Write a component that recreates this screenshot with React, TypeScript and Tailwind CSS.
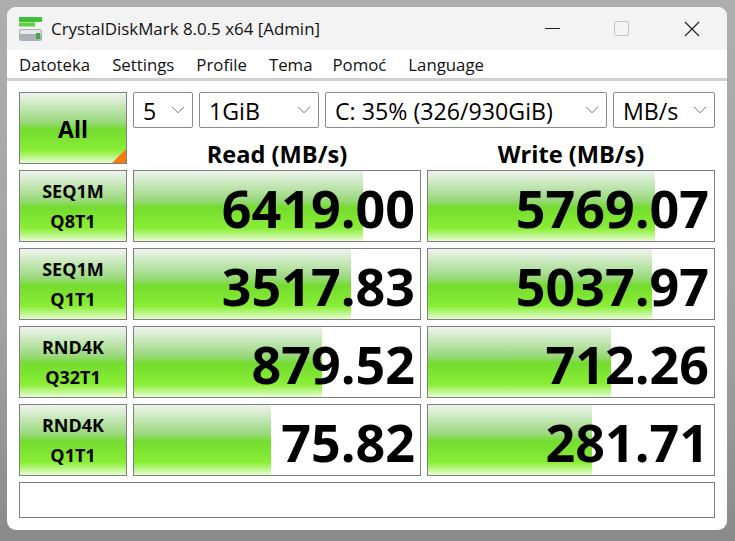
import { ChevronDown } from "lucide-react";

const GREEN =
  "bg-[linear-gradient(to_bottom,#eef4ee_0%,#98d87a_42%,#74dc2e_52%,#8aee36_82%,#e6fdd2_100%)]";

const rows = [
  { a: "SEQ1M", b: "Q8T1", read: "6419.00", readW: "w-[229px]", write: "5769.07", writeW: "w-[227px]" },
  { a: "SEQ1M", b: "Q1T1", read: "3517.83", readW: "w-[217px]", write: "5037.97", writeW: "w-[224px]" },
  { a: "RND4K", b: "Q32T1", read: "879.52", readW: "w-[188px]", write: "712.26", writeW: "w-[183px]" },
  { a: "RND4K", b: "Q1T1", read: "75.82", readW: "w-[137px]", write: "281.71", writeW: "w-[164px]" },
];

function Select({ label, className }: { label: string; className: string }) {
  return (
    <div
      className={`flex h-9 items-center justify-between rounded-[2px] border border-[#8c8c8c] bg-white pl-[9px] pr-[3px] text-[23.2px] text-black ${className}`}
    >
      <span className="relative top-px whitespace-nowrap">{label}</span>
      <ChevronDown size={22} strokeWidth={0.9} className="text-[#555]" />
    </div>
  );
}

function Score({ value, width }: { value: string; width: string }) {
  return (
    <div className="relative h-[72px] overflow-hidden border border-[#808080] bg-white">
      <div className={`h-full ${width} ${GREEN}`} />
      <div className="absolute inset-0 flex items-center justify-end pt-[3px] pr-[5px] text-[52px] leading-none font-bold text-black">
        {value}
      </div>
    </div>
  );
}

export default function App() {
  return (
    <div className="h-[541px] w-[735px] overflow-hidden bg-[linear-gradient(to_bottom,#aeaeae,#a2a2a2_60%,#8a8a8a)] pt-[7px] pl-[7px] font-['Open_Sans',sans-serif]">
      <div className="h-[523px] w-[720px] overflow-hidden rounded-[9px] bg-white">
        {/* title bar */}
        <div className="flex h-[43px] items-center bg-[#f3f3f3] pl-[11px]">
          <svg width="24" height="24" viewBox="0 0 24 24" className="shrink-0">
            <rect x="1" y="0" width="23" height="5" fill="#3fbf3a" />
            <rect x="1" y="5.5" width="16" height="4" fill="#5fd03f" />
            <rect x="1" y="12" width="23" height="12" rx="2.5" fill="#a9b0b8" />
            <rect x="2" y="13" width="21" height="4" rx="1.5" fill="#e6e8ea" />
            <rect x="18" y="16" width="4" height="6" fill="#47a83f" />
          </svg>
          <span className="ml-[9px] text-[16.9px] whitespace-nowrap text-[#111]">
            CrystalDiskMark 8.0.5 x64 [Admin]
          </span>
          <div className="ml-auto flex items-center pr-[27px]">
            <div className="h-px w-[15px] bg-[#222]" />
            <div className="ml-[54px] size-[15px] rounded-[2px] border border-[#c4c4c4]" />
            <svg width="16" height="16" viewBox="0 0 16 16" className="ml-[55px]">
              <path d="M1 1 L15 15 M15 1 L1 15" stroke="#222" strokeWidth="1.2" fill="none" />
            </svg>
          </div>
        </div>

        {/* menu */}
        <div className="flex h-[31px] items-center gap-[22px] border-b-[3px] border-b-[#d0d0d0] pt-[2px] pl-[12px] text-[16.8px] text-[#111]">
          <span>Datoteka</span>
          <span>Settings</span>
          <span>Profile</span>
          <span className="-mr-[2px]">Tema</span>
          <span>Pomoć</span>
          <span>Language</span>
        </div>

        <div className="flex flex-col gap-[6px] pt-[11px] pl-[12px]">
          {/* controls */}
          <div className="flex gap-[6px]">
            <div
              className={`relative flex h-[72px] w-[108px] items-center justify-center border border-[#808080] pt-[2px] text-[23px] font-bold text-black ${GREEN}`}
            >
              All
              <div className="absolute right-0 bottom-0 size-[14px] bg-[#f97a10] [clip-path:polygon(100%_0,100%_100%,0_100%)]" />
            </div>
            <div className="flex h-[72px] w-[582px] flex-col">
              <div className="flex gap-[6px]">
                <Select label="5" className="w-[60px]" />
                <Select label="1GiB" className="w-[120px]" />
                <Select label="C: 35% (326/930GiB)" className="w-[282px]" />
                <Select label="MB/s" className="w-[102px]" />
              </div>
              <div className="grid h-9 grid-cols-2 gap-[6px] pt-[15px] text-[23.6px] leading-none font-bold text-black">
                <div className="flex items-center justify-center">Read (MB/s)</div>
                <div className="flex items-center justify-center">Write (MB/s)</div>
              </div>
            </div>
          </div>

          {/* results */}
          {rows.map((r) => (
            <div key={r.a + r.b} className="flex gap-[6px]">
              <div
                className={`flex h-[72px] w-[108px] flex-col items-center justify-center gap-[8px] border border-[#808080] text-[18px] leading-[22px] font-bold text-black ${GREEN}`}
              >
                <span>{r.a}</span>
                <span>{r.b}</span>
              </div>
              <div className="grid w-[582px] grid-cols-2 gap-[6px]">
                <Score value={r.read} width={r.readW} />
                <Score value={r.write} width={r.writeW} />
              </div>
            </div>
          ))}

          {/* comment */}
          <div className="h-9 w-[696px] border border-[#808080] bg-white" />
        </div>
      </div>
    </div>
  );
}
